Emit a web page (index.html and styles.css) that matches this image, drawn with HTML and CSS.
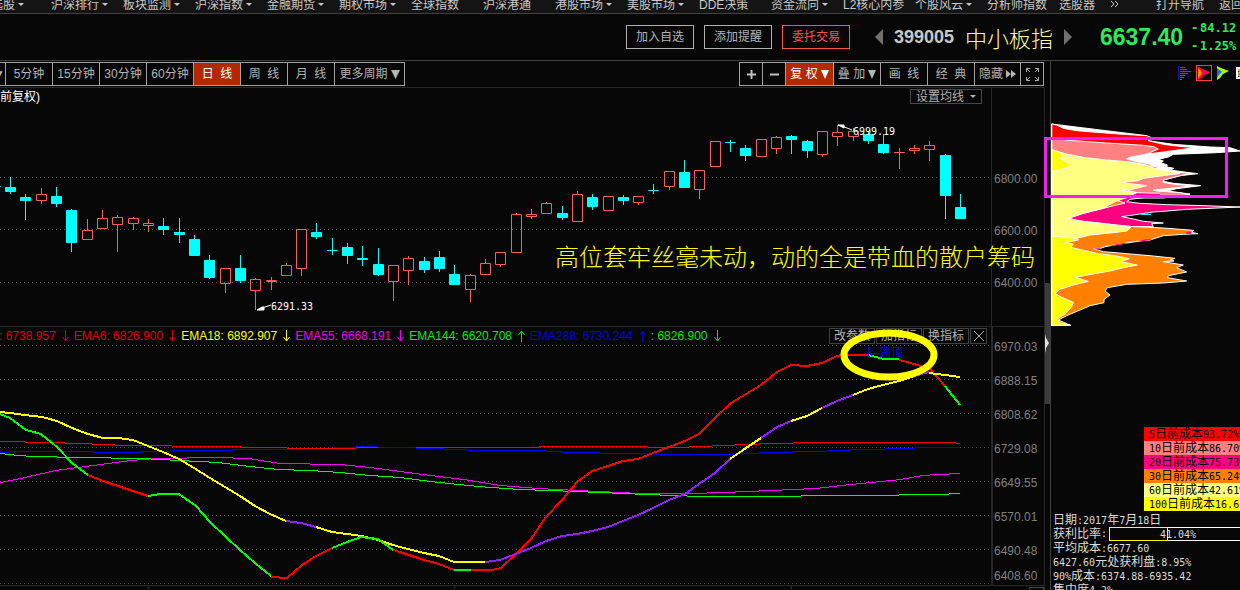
FILE: index.html
```html
<!DOCTYPE html>
<html lang="zh-CN">
<head>
<meta charset="utf-8">
<title>中小板指 399005</title>
<link rel="stylesheet" href="styles.css">
</head>
<body>
<nav class="topnav">
  <a class="drop" href="#">自选股</a>
  <a class="drop" href="#">沪深排行</a>
  <a class="drop" href="#">板块监测</a>
  <a class="drop" href="#">沪深指数</a>
  <a class="drop" href="#">金融期货</a>
  <a class="drop" href="#">期权市场</a>
  <a href="#">全球指数</a>
  <a href="#">沪深港通</a>
  <a class="drop" href="#">港股市场</a>
  <a class="drop" href="#">美股市场</a>
  <a href="#">DDE决策</a>
  <a class="drop" href="#">资金流向</a>
  <a href="#">L2核心内参</a>
  <a class="drop" href="#">个股风云</a>
  <a href="#">分析师指数</a>
  <a class="short" href="#">选股器</a>
  <a class="more" href="#" aria-label="更多"><svg width="9" height="7" viewBox="0 0 9 7"><path d="M1 0l3 3-3 3M5 0l3 3-3 3" fill="none" stroke="currentColor"/></svg></a>
  <a class="guide" href="#">打开导航</a>
  <a href="#">返回</a>
</nav>

<header class="quote">
  <div class="actions">
    <button>加入自选</button>
    <button>添加提醒</button>
    <button class="trade">委托交易</button>
  </div>
  <div class="symbol">
    <button class="step" aria-label="上一个"><svg width="8" height="16" viewBox="0 0 8 16"><path d="M8 0v16L0 8z" fill="#707070"/></svg></button>
    <span class="code">399005</span>
    <span class="name">中小板指</span>
    <button class="step" aria-label="下一个"><svg width="8" height="16" viewBox="0 0 8 16"><path d="M0 0v16l8-8z" fill="#707070"/></svg></button>
  </div>
  <strong class="last">6637.40</strong>
  <div class="change"><span><i>-</i>84.12</span><span><i>-</i>1.25%</span></div>
</header>

<main class="workspace">
  <section class="left">
    <div class="toolbar">
      <div class="group periods">
        <button class="cut">▼</button>
        <button>5分钟</button>
        <button>15分钟</button>
        <button>30分钟</button>
        <button>60分钟</button>
        <button class="active">日&nbsp;&nbsp;线</button>
        <button>周&nbsp;&nbsp;线</button>
        <button>月&nbsp;&nbsp;线</button>
        <button class="wide">更多周期<svg class="tri" width="9" height="10" viewBox="0 0 9 10"><path d="M0 1h9L4.500 10z" fill="currentColor"/></svg></button>
      </div>
      <div class="group tools">
        <button class="small" aria-label="放大"><svg width="9" height="9" viewBox="0 0 9 9"><path d="M0 4.500h9M4.500 0v9" stroke="#c0c0c0" stroke-width="2"/></svg></button>
        <button class="small" aria-label="缩小"><svg width="9" height="9" viewBox="0 0 9 9"><path d="M0 4.500h9" stroke="#c0c0c0" stroke-width="2"/></svg></button>
        <button class="active adjust">复&nbsp;权<svg class="tri" width="8" height="9" viewBox="0 0 8 9"><path d="M0 0h8L4 9z" fill="currentColor"/></svg></button>
        <button>叠&nbsp;加<svg class="tri" width="8" height="9" viewBox="0 0 8 9"><path d="M0 0h8L4 9z" fill="currentColor"/></svg></button>
        <button>画&nbsp;&nbsp;线</button>
        <button>经&nbsp;&nbsp;典</button>
        <button class="hide">隐藏<svg class="tri" width="10" height="8" viewBox="0 0 10 8"><path d="M0 0l5 4-5 4zM5 0l5 4-5 4z" fill="currentColor"/></svg></button>
        <button class="small" aria-label="全屏"><svg width="13" height="13" viewBox="0 0 13 13"><path d="M.5 4V.5H4M9 .5h3.500V4M12.500 9v3.500H9M4 12.500H.5V9M1 1l3 3M12 1L9 4M12 12L9 9M1 12l3-3" fill="none" stroke="#b0b0b0"/></svg></button>
      </div>
    </div>

    <div class="stage">
      <div class="frame">
        <div class="panel price">
          <div class="plot">
            <svg class="chart" viewBox="0 88 991 238" preserveAspectRatio="xMinYMin meet">
              <path class="grid" d="M0 177.500H991M0 229.500H991M0 282.500H991"/>
              <g id="candles"></g>
              <path d="M257 310l5-3h2v3zM262 308l9-3" class="pointer"/>
              <text class="mark" x="271" y="310">6291.33</text>
              <path d="M838 125h6v3zM842 126l10 4" class="pointer"/>
              <text class="mark" x="853" y="135">6999.19</text>
            </svg>
            <span class="adjusted">前复权)</span>
            <button class="ma-setting">设置均线<i class="caret"></i></button>
          </div>
          <div class="axis"><span>6800.00</span><span>6600.00</span><span>6400.00</span></div>
        </div>
        <div class="panel ema">
          <div class="plot">
            <svg class="chart" viewBox="0 327 991 258" preserveAspectRatio="xMinYMin meet">
              <path class="grid" d="M0 345.500H991M0 379.500H991M0 413.500H991M0 447.500H991M0 481.500H991M0 515.500H991M0 549.500H991M0 583.500H991"/>
              <g id="lines"></g>
              <path d="M868.500 347v11M869 353.500h10M872 350l-3 3 3 3" fill="none" stroke="#0000ff"/>
              <text class="escape" x="879" y="357">逃顶</text>
            </svg>
            <div class="legend" id="legend"></div>
            <div class="panel-tools">
              <button>改参数</button><button>加指标</button><button>换指标</button>
              <button class="close" aria-label="关闭"><svg width="10" height="10" viewBox="0 0 10 10"><path d="M0 0l10 10M10 0L0 10" stroke="#b0b0b0"/></svg></button>
            </div>
            <svg class="ring" width="98" height="52" viewBox="0 0 98 52"><ellipse cx="49" cy="26" rx="45" ry="22" fill="none" stroke="#ffff00" stroke-width="7"/></svg>
          </div>
          <div class="axis"><span>6970.03</span><span>6888.15</span><span>6808.62</span><span>6729.08</span><span>6649.55</span><span>6570.01</span><span>6490.48</span><span class="floor">6408.60</span></div>
        </div>
        <div class="timeline"><svg width="800" height="3" viewBox="0 0 800 3"><path d="M148.500 0v3M454.500 0v3M791.500 0v3" stroke="#333"/></svg><i></i></div>
      </div>
      <div class="splitter"><div class="grip"><svg width="4" height="20" viewBox="0 0 4 20"><path d="M0 0l1 4 3 5-3 5-1 5z" fill="#e0e0e0"/></svg></div></div>
      <p class="note">高位套牢丝毫未动，动的全是带血的散户筹码</p>
      <div class="highlight"></div>
    </div>
  </section>

  <aside class="chips">
    <div class="chip-tools">
      <button aria-label="筹码"><svg width="13" height="14" viewBox="0 0 13 14"><path d="M.5 0v14" stroke="#1515c0"/><path d="M2 1.500h5M2 3.500h7M2 5.500h11M2 7.500h8" stroke="#009000"/><path d="M2 9.500h5M2 11.500h4M2 13.500h2" stroke="#d04010"/></svg></button>
      <button class="on" aria-label="近期成本"><svg width="12" height="14" viewBox="0 0 12 14"><path d="M0 0l4 3 8 3v1L6 9l-2 3-4 2z" fill="#ff0050"/><path d="M0 2l3 3 1 2-2 3-2 3z" fill="#ff9000"/></svg></button>
      <button aria-label="远期成本"><svg width="12" height="14" viewBox="0 0 12 14"><path d="M0 0l4 2 8 3-6 3-3 4-3 2z" fill="#a0ff00"/><path d="M0 2l4 3 1 1-3 3-2 3z" fill="#3060ff"/></svg></button>
      <button class="last-tool" aria-label="设置"><svg width="12" height="12" viewBox="0 0 12 12"><path d="M1 1h10v10H1z" fill="#302820" stroke="#fff" stroke-width="2"/><path d="M2 2h9v2H2z" fill="#ffb000"/><path d="M3 5h5v4H3z" fill="none" stroke="#fff"/></svg></button>
    </div>
    <svg class="distribution" viewBox="63 -66 567 720" preserveAspectRatio="xMinYMin meet">
      <g stroke="#fff" stroke-width="3" stroke-linejoin="round">
        <path fill="#fff" d="M65 42L350 77 355 92 430 103 540 111 600 113 630 123 560 128 430 133 415 141 385 148 400 153 392 158 412 165 410 171 432 175 420 180 470 187 503 191 450 197 420 205 392 212 430 220 512 227 440 236 412 243 480 252 400 264 65 264z"/>
        <path fill="#ff0000" d="M65 42L80 45 100 55 140 62 200 67 280 73 350 77 368 84 355 92 400 103 440 108 495 113 400 126 345 133 65 133z"/>
        <path fill="#ff8080" d="M65 82L115 91 230 99 340 106 370 110 385 117 350 132 300 142 290 147 320 155 360 162 363 168 390 172 372 176 400 182 450 187 480 190 440 200 400 210 400 217 440 224 490 227 440 233 370 240 382 243 450 248 480 256 65 256z"/>
        <path fill="#ff0080" d="M65 240H290L320 248 390 250 395 256 300 268 290 275 330 280 410 284 520 287 630 291 540 295 470 298 410 303 370 306 330 312 275 320 310 327 340 334 400 339 365 341 370 350 65 350z"/>
        <path fill="#ff8000" d="M65 256L285 262 262 272 285 279 255 286 220 295 160 310 115 325 150 333 240 343 310 350 400 354 490 361 485 367 503 371 460 373 400 377 360 390 330 393 270 402 225 410 212 415 190 416 220 425 290 431 370 438 435 445 420 450 432 453 400 455 460 465 440 473 470 486 415 497 412 503 470 513 400 519 290 523 232 533 225 543 240 555 222 568 222 578 180 587 150 600 110 617 85 630 122 646 65 646z"/>
        <path fill="#ffff80" d="M65 120L110 132 160 142 230 150 300 156 350 165 380 178 430 186 450 190 400 197 340 205 320 213 270 215 300 221 350 227 310 237 275 241 320 248 290 263 262 272 235 286 220 295 160 310 115 325 150 333 240 343 303 352 290 363 250 368 180 375 140 385 65 380z"/>
        <path fill="#ffff00" d="M65 118L85 125 98 135 90 145 115 158 122 167 105 175 75 182 65 186zM65 378L140 385 145 390 108 397 130 403 122 412 170 423 200 430 260 438 298 446 272 455 322 465 280 473 240 483 200 490 135 502 175 514 130 525 90 538 75 550 95 562 130 577 125 590 108 610 80 628 90 638 122 646 65 646z"/>
      </g>
      <path d="M350 388h20l-25 5-20-1zM470 365h14v6h-16zM280 399h20l-50 8h-14zM190 415h22l-6 4z" fill="#ff0080"/>
      <path d="M333 311h30v4h-30z" fill="#00ffff"/>
      <path d="M65 42V648" stroke="#fff" stroke-width="3"/>
    </svg>
    <ul class="costs">
      <li class="d5"><b>5</b>日前成本<b>93.72%</b></li>
      <li class="d10"><b>10</b>日前成本<b>86.70%</b></li>
      <li class="d20"><b>20</b>日前成本<b>75.73%</b></li>
      <li class="d30"><b>30</b>日前成本<b>65.24%</b></li>
      <li class="d60"><b>60</b>日前成本<b>42.61%</b></li>
      <li class="d100"><b>100</b>日前成本<b>16.65%</b></li>
    </ul>
    <div class="facts">
      <p>日期<b>:2017</b>年<b>7</b>月<b>18</b>日</p>
      <p class="ratio">获利比率<b>:</b><span class="bar"><i style="width:43%"></i><b>41.04%</b></span></p>
      <p>平均成本<b>:6677.60</b></p>
      <p><b>6427.60</b>元处获利盘<b>:8.95%</b></p>
      <p><b>90%</b>成本<b>:6374.88-6935.42</b></p>
      <p>集中度<b>4.2%</b></p>
    </div>
  </aside>
</main>
<script src="charts.js"></script>
</body>
</html>
```
FILE: styles.css
```css
* { box-sizing: border-box; }

body {
  margin: 0;
  min-height: 100vh;
  display: flex;
  flex-direction: column;
  overflow: hidden;
  background: #070707;
  color: #b4b4b4;
  font: 12px/14px "Liberation Sans", "Noto Sans CJK SC", sans-serif;
}

button {
  display: flex;
  align-items: center;
  justify-content: center;
  margin: 0;
  padding: 0;
  border: 0;
  background: none;
  color: inherit;
  font: inherit;
  white-space: nowrap;
}

p, ul { margin: 0; padding: 0; list-style: none; }
i { font-style: normal; }

/* navigation */
.topnav {
  display: flex;
  height: 14px;
  margin-left: -21px;
  border-bottom: 1px solid #404040;
  background: #141414;
}
.topnav a {
  flex: 0 0 72px;
  display: flex;
  align-items: center;
  gap: 3px;
  height: 9px;
  color: #c8c8c8;
  text-decoration: none;
  white-space: nowrap;
}
.topnav .short { flex-basis: 51px; }
.topnav .more { flex-basis: 46px; }
.topnav .guide { flex-basis: 63px; }
.drop::after, .caret {
  content: "";
  border: 3px solid transparent;
  border-top-color: currentColor;
  border-bottom: 0;
}

/* quote header */
.quote {
  display: flex;
  align-items: center;
  justify-content: flex-end;
  height: 47px;
  border-bottom: 1px solid #404040;
  white-space: nowrap;
}
.actions { display: flex; gap: 10px; margin-right: 25px; }
.actions button { width: 68px; height: 24px; border: 1px solid #b0b0b0; }
.actions .trade { border-color: #ff5050; color: #ff5050; }
.symbol { display: flex; align-items: center; margin-right: 28px; }
.code { margin: 0 11px; color: #c8c8c8; font-size: 18px; font-weight: bold; }
.name {
  margin-right: 11px;
  color: #ffffa0;
  font: 300 22px/30px "Noto Sans CJK SC", sans-serif;
}
.last { width: 91px; color: #32e65a; font-size: 23px; }
.change {
  display: flex;
  flex-direction: column;
  width: 49px;
  color: #32e65a;
  font: bold 12px/18px "DejaVu Sans Mono", monospace;
}
.change i { display: inline-block; width: 9px; }

/* workspace */
.workspace { flex: 1; display: grid; grid-template-columns: minmax(0, 1fr) 190px; }
.left { display: flex; flex-direction: column; min-width: 0; }
.toolbar {
  display: flex;
  justify-content: space-between;
  margin-right: 5px;
  padding: 1px 1px 1px 0;
  border-bottom: 1px solid #282828;
}
.group { display: flex; }
.group button {
  width: 48px;
  height: 24px;
  margin-right: -1px;
  border: 1px solid #a0a0a0;
}
.group button:last-child { margin-right: 0; }
.group .active { background: #b42800; color: #fff; }
.group .cut { width: 6px; border-left: 0; overflow: hidden; justify-content: flex-end; }
.group .wide { width: 71px; }
.group .small { width: 24px; }
.group .adjust { width: 49px; }
.group .hide { width: 47px; }
.tri { margin-left: 3px; }

.stage { position: relative; flex: 1; display: flex; }
.frame { flex: 1; min-width: 0; border-right: 1px solid #282828; }
.panel {
  display: grid;
  grid-template-columns: minmax(0, 1fr) 53px;
  border-bottom: 1px solid #282828;
}
.price { height: 239px; }
.ema { height: 259px; }
.plot { position: relative; min-width: 0; }
.chart { display: block; width: 100%; height: 100%; }
.grid { stroke: #505050; stroke-dasharray: 1 3; }
.axis {
  display: flex;
  flex-direction: column;
  padding-left: 2px;
  border-left: 1px solid #282828;
  color: #808080;
}
.price .axis { padding-top: 65px; line-height: 52px; }
.ema .axis { padding-top: 3px; line-height: 34px; border-left-width: 2px; padding-left: 1px; }
.ema .axis .floor { line-height: 17px; }

.up { fill: none; stroke: #ff5c5c; }
.down { fill: #00ffff; stroke: #00ffff; }
.pointer { fill: #fff; stroke: #fff; }
.mark { fill: #fff; font: 10px "DejaVu Sans Mono", monospace; }
.escape { fill: #0000ff; font: 12px "Noto Sans CJK SC", sans-serif; }
.thick { fill: none; stroke-width: 2; shape-rendering: crispEdges; }
.thin { fill: none; stroke-width: 1; }

.adjusted { position: absolute; top: 2px; left: 0; color: #fff; }
.ma-setting {
  position: absolute;
  top: 1px;
  right: 9px;
  width: 72px;
  height: 15px;
  gap: 6px;
  border: 1px solid #484848;
}
.legend { position: absolute; top: 2px; left: -1px; display: flex; gap: 5px; white-space: pre; }
.legend span { display: flex; align-items: center; gap: 5px; }
.panel-tools { position: absolute; top: 1px; right: 4px; display: flex; gap: 1px; }
.panel-tools button { width: 46px; height: 16px; border: 1px solid #404040; background: #070707; }
.panel-tools .close { width: 17px; }
.ring { position: absolute; top: 2px; right: 53px; }

.timeline { display: flex; justify-content: space-between; align-items: flex-start; height: 4px; overflow: hidden; }
.timeline i { width: 15px; height: 8px; margin-top: 1px; border: 1px solid #484848; }

.splitter { width: 5px; padding-top: 195px; }
.grip { height: 121px; padding-top: 51px; background: #3c3c3c; }
.grip svg { display: block; }

.note {
  position: absolute;
  top: 151px;
  right: 15px;
  color: #ffff00;
  font: 300 24px/34px "Noto Sans CJK SC", sans-serif;
  white-space: nowrap;
}
.highlight {
  position: absolute;
  top: 49px;
  right: -178px;
  width: 184px;
  height: 61px;
  border: 3px solid #f020f0;
}

/* cost distribution */
.chips { border-left: 1px solid #404040; overflow: hidden; white-space: nowrap; color: #dcdcdc; }
.chip-tools { display: flex; align-items: center; height: 27px; padding: 0 0 3px 127px; gap: 5px; }
.chip-tools button { flex: none; }
.chip-tools .on { width: 16px; height: 16px; border: 1px solid #ff4040; }
.chip-tools .last-tool { margin-left: 2px; }
.distribution { display: block; width: 100%; height: 240px; }
.chips b { font: 10px/14px "DejaVu Sans Mono", monospace; }
.costs { margin: 99px 0 2px 93px; color: #000; }
.costs li { height: 14px; padding-left: 5px; }
.d5 { background: #ff0000; }
.d10 { background: #ff8080; }
.d20 { background: #ff0080; }
.d30 { background: #ff8000; }
.d60 { background: #ffff80; }
.d100 { background: #ffff00; }
.facts { height: 77px; padding-left: 2px; overflow: hidden; }
.facts p { height: 14px; }
.ratio { display: flex; }
.bar {
  position: relative;
  flex: 0 0 138px;
  height: 14px;
  margin-left: 2px;
  border: 1px solid #fff;
  line-height: 12px;
  text-align: center;
}
.bar i { position: absolute; inset: -1px auto -1px -1px; border: 1px solid #ffff00; }
.bar b { line-height: 12px; }
```
FILE: charts.js
```js
const NS = "http://www.w3.org/2000/svg";

function add(parent, tag, attrs) {
  const el = document.createElementNS(NS, tag);
  for (const key in attrs) el.setAttribute(key, attrs[key]);
  parent.appendChild(el);
  return el;
}

// x, high, body top, body bottom, low, direction (1 = up, 0 = down)
const candles = [
  [-5,186,186,187,187,0],[10,177,187,192,194,0],[25,194,197,201,220,0],[41,188,194,201,204,1],[56,187,196,204,207,0],
  [71,209,210,243,252,0],[87,219,230,240,240,1],[102,210,218,229,229,1],[117,215,217,225,252,1],
  [133,217,218,224,230,1],[148,219,223,226,232,1],[163,218,226,230,235,0],[179,218,232,235,243,0],
  [194,235,239,256,256,0],[209,255,260,278,279,0],[225,268,268,284,293,1],[240,255,268,281,283,0],
  [255,278,279,291,310,1],[271,277,280,282,290,1],[286,263,265,276,276,1],[301,229,229,269,276,1],
  [316,223,232,237,239,0],[332,238,250,251,255,0],[347,243,247,256,264,0],[362,246,258,260,266,0],
  [378,248,264,275,276,0],[393,265,265,282,301,1],[408,256,258,271,285,1],[424,257,261,270,273,0],
  [439,251,257,269,272,0],[454,265,274,285,285,0],[470,274,275,290,302,1],[485,259,263,275,275,1],
  [500,252,252,265,267,1],[516,213,214,253,253,1],[531,209,214,217,219,1],[546,202,203,214,214,1],
  [562,206,213,218,220,0],[577,191,194,222,222,1],[592,194,197,207,210,0],[608,196,196,211,211,1],
  [623,195,197,201,205,0],[638,196,196,203,205,1],[653,184,190,191,194,0],[669,171,171,187,190,1],
  [684,160,172,188,188,0],[699,170,170,190,199,1],[715,141,141,167,167,1],[730,140,142,143,152,0],
  [745,145,148,156,161,0],[761,139,139,157,157,1],[776,136,137,149,154,1],[791,135,136,140,154,0],
  [807,140,141,151,158,0],[822,131,131,155,157,1],[837,125,132,137,146,1],[853,128,131,137,141,1],
  [868,131,134,141,144,0],[883,134,144,153,154,0],[899,148,152,153,169,1],[914,145,148,151,154,1],
  [929,141,145,150,161,1],[945,154,155,196,219,0],[960,194,207,219,219,0]
];
const candleLayer = document.getElementById("candles");
for (const [x, high, top, bottom, low, up] of candles) {
  const cx = x + 0.5;
  add(candleLayer, "path", {
    class: up ? "up" : "down",
    d: `M${cx} ${high}V${top}M${cx} ${bottom}V${low}M${cx - 5} ${top + 0.5}h10V${bottom - 0.5}h-10z`
  });
}

const RED = "#ff0000", GREEN = "#00ff00", YELLOW = "#ffff00", VIOLET = "#9020ff", BLUE = "#0000ff", MAGENTA = "#ff00ff";

// Averages drawn one pixel wide, as level steps
const averages = [
  [MAGENTA, "0,482 20,478 55,470 100,464 130,460 155,458 218,457 248,458 280,463 340,464 370,467 400,471 430,475 463,479 500,485 538,488 577,490 640,493 690,493 723,492 770,490 815,488 850,484 900,479 922,475 937,474 960,473"],
  [GREEN, "0,453 18,455 34,456 80,457 141,458 179,460 218,462 250,466 278,469 310,470 340,472 370,475 400,477 430,481 478,486 520,489 550,490 600,492 646,494 700,496 740,496 860,495 937,494 960,493"],
  [BLUE, "0,452 18,451 60,451 126,452 155,451 187,450 278,449 310,448 355,447"],
  [RED, "0,441 50,442 80,443 126,445 218,446 264,447 310,448 400,447 523,447 554,446 616,446 677,447 723,445 770,443 815,442 952,442 960,443"],
  [BLUE, "355,446 400,447 432,448 478,450 538,450 570,452 630,453 677,454 723,454 770,452 815,451 861,449 907,448 922,447 960,447"]
];

function steps(points) {
  const p = points.split(" ").map(s => s.split(",").map(Number));
  let d = "", level = null;
  for (let i = 1; i < p.length; i++) {
    const [x0, y0] = p[i - 1], [x1, y1] = p[i];
    for (let x = x0; x < x1; x++) {
      const y = Math.round(y0 + (y1 - y0) * (x - x0) / (x1 - x0));
      if (y !== level) d += `${level === null ? "" : "H" + x}M${x} ${y + 0.5}`;
      level = y;
    }
  }
  return d + "H" + p[p.length - 1][0];
}

const lines = [
  [YELLOW, "0,412 10,413 25,415 42,417 57,421 72,428 88,434 103,438 118,438 133,440 148,446 163,452 179,459 194,468 210,478 225,487 240,496 255,506 270,514 286,521"],
  [VIOLET, "286,521 301,523 316,527"],
  [YELLOW, "316,527 332,532 347,534 362,536 378,540 393,545 400,547 424,553 439,556 454,562 485,562"],
  [GREEN, "0,414 10,418 26,430 41,434 57,447 72,463 88,475"],
  [RED, "88,475 103,481 133,491 148,496"],
  [GREEN, "148,496 160,494 179,494 196,506 210,522 225,536 240,550 255,563 271,576"],
  [RED, "271,577 287,578 302,565 316,556 332,548"],
  [GREEN, "332,548 347,542 361,537 378,539 393,550"],
  [RED, "393,550 400,552 424,560 439,564 454,570"],
  [GREEN, "454,570 471,570"],
  [RED, "471,570 492,570 501,568 516,554 531,539 546,517 562,500 577,482 592,471 608,466 623,461 638,459 653,453 669,447 685,441 699,434 715,418 731,403 746,394 761,385 777,372 791,365 807,366 822,363 837,356 842,355 868,355"],
  [GREEN, "868,355 884,359 899,359"],
  [RED, "899,360 914,364 930,369 945,386"],
  [GREEN, "945,386 960,405"],
  [VIOLET, "485,562 500,560 516,554 531,548 546,541 562,536 577,534 592,531 608,527 623,521 638,515 653,508 669,500 685,494 699,484 715,473 730,459"],
  [YELLOW, "730,459 746,448 761,438"],
  [VIOLET, "761,438 777,427 791,421"],
  [YELLOW, "791,421 807,416 822,408"],
  [VIOLET, "822,408 837,401 853,395"],
  [YELLOW, "853,395 868,389 883,385 899,381 914,376"],
  [VIOLET, "914,376 929,372"],
  [YELLOW, "929,373 945,375 960,377"]
];
const lineLayer = document.getElementById("lines");
for (const [stroke, points] of averages) add(lineLayer, "path", { class: "thin", stroke, d: steps(points) });
for (const [stroke, points] of lines) add(lineLayer, "polyline", { class: "thick", stroke, points });

const legend = [
  [": 6738.957", "#e00000", 0],
  ["EMA6: 6826.900", "#e00000", 0],
  ["EMA18: 6892.907", "#ffff00", 0],
  ["EMA55: 6668.191", "#f000f0", 0],
  ["EMA144: 6620.708", "#00f000", 1],
  ["EMA288: 6730.244", "#0000e0", 1],
  [": 6826.900", "#00f000", 0]
];
const legendBox = document.getElementById("legend");
for (const [label, color, rising] of legend) {
  const item = document.createElement("span");
  item.style.color = color;
  item.textContent = label;
  const icon = add(item, "svg", { width: 8, height: 12, viewBox: "0 0 8 12" });
  add(icon, "path", {
    d: rising ? "M4.500 12V1M1.500 5l3-4 3 4" : "M4.500 0v11M1.500 7l3 4 3-4",
    fill: "none",
    stroke: color
  });
  legendBox.appendChild(item);
}
```
